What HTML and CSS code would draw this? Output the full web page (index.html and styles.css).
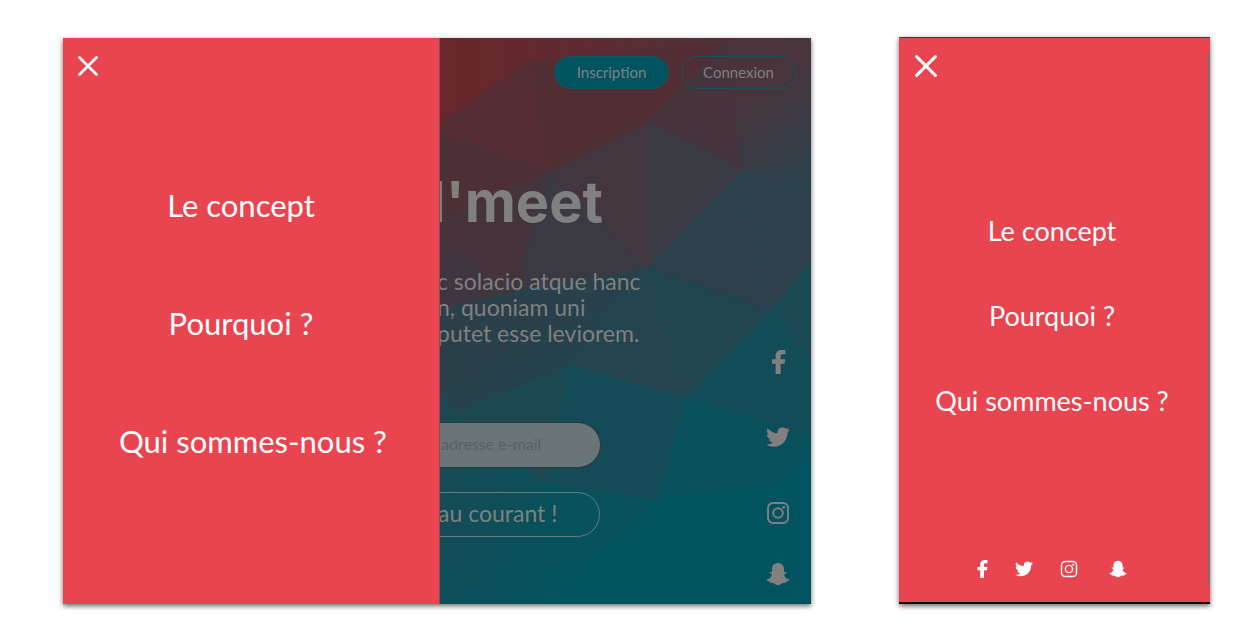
FILE: index.html
```html
<!DOCTYPE html>
<html lang="fr">
<head>
<meta charset="utf-8">
<title>N'meet</title>
<link rel="stylesheet" href="styles.css">
</head>
<body>
<svg class="sprite" aria-hidden="true">
  <symbol id="close" viewBox="0 0 20 20"><path d="M1.500 1.500 18.500 18.500M18.500 1.500 1.500 18.500" fill="none" stroke="currentColor" stroke-width="2.700" stroke-linecap="round"/></symbol>
  <symbol id="facebook" viewBox="0 0 24 24"><path d="M9.600 24V13.800H6V9.300H9.600V6.200C9.600 2.200 11.900 0 15.500 0H19.300V4.300H16.800C15 4.300 14.600 5.200 14.600 6.500V9.300H19.200L18.600 13.800H14.600V24Z" fill="currentColor"/></symbol>
  <symbol id="twitter" viewBox="0 0 24 24"><path d="M23.954 4.569a10 10 0 0 1-2.825.775 4.958 4.958 0 0 0 2.163-2.723 9.900 9.900 0 0 1-3.127 1.184 4.920 4.920 0 0 0-8.384 4.482C7.691 8.094 4.066 6.130 1.640 3.161a4.822 4.822 0 0 0-.666 2.475c0 1.710.870 3.213 2.188 4.096a4.904 4.904 0 0 1-2.228-.616v.061a4.923 4.923 0 0 0 3.946 4.827 4.996 4.996 0 0 1-2.212.085 4.937 4.937 0 0 0 4.604 3.417 9.868 9.868 0 0 1-6.102 2.105c-.390 0-.779-.023-1.170-.067a13.995 13.995 0 0 0 7.557 2.209c9.054 0 13.999-7.496 13.999-13.986 0-.209 0-.420-.015-.630a9.936 9.936 0 0 0 2.460-2.548Z" fill="currentColor"/></symbol>
  <symbol id="instagram" viewBox="0 0 24 24"><g fill="none" stroke="currentColor" stroke-width="1.900"><rect x="2" y="2" width="20" height="20" rx="5"/><circle cx="12" cy="12" r="4.800"/></g><circle cx="17.700" cy="6.300" r="1.400" fill="currentColor"/></symbol>
  <symbol id="snapchat" viewBox="0 0 24 24"><path d="M12 1C8.500 1 6 3.400 6 6.800V10C5.300 10.400 4.200 9.400 3.500 10.100 3.100 10.900 4.400 11.600 5.600 12.200 6.200 12.900 5.100 15.100 3.600 16.300 2.500 17.200.6 17.300.5 18.100.5 19.100 2.700 19.200 3.500 19.500L4 20.900C5.500 20.700 6.900 20.500 8.200 21.400 9.500 22.300 10.500 23 12 23S14.500 22.300 15.800 21.400C17.100 20.500 18.500 20.700 20 20.900L20.500 19.500C21.300 19.200 23.500 19.100 23.500 18.100 23.400 17.300 21.500 17.200 20.400 16.300 18.900 15.100 17.800 12.900 18.400 12.200 19.600 11.600 20.900 10.900 20.500 10.100 19.800 9.400 18.700 10.400 18 10V6.800C18 3.400 15.500 1 12 1Z" fill="currentColor"/></symbol>
</svg>

<main class="stage">
  <section class="tablet">
    <div class="drawer">
      <button class="close" aria-label="Fermer"><svg><use href="#close"/></svg></button>
      <nav class="menu">
        <a href="#concept">Le concept</a>
        <a href="#pourquoi">Pourquoi ?</a>
        <a href="#equipe">Qui sommes-nous ?</a>
      </nav>
    </div>
    <div class="page">
      <svg class="mosaic" viewBox="0 0 371 566" preserveAspectRatio="none" aria-hidden="true">
        <defs>
          <linearGradient id="top"><stop offset="0" stop-color="#68272b"/><stop offset=".25" stop-color="#62292f"/><stop offset="1" stop-color="#49343c"/></linearGradient>
          <linearGradient id="corner" x1=".3" y1="0" x2=".7" y2="1"><stop offset=".3" stop-color="#49343c"/><stop offset="1" stop-color="#2c404a"/></linearGradient>
          <linearGradient id="shade" x1="0" y1="0" x2="1" y2="1"><stop offset="0" stop-color="#303d47"/><stop offset="1" stop-color="#1e4650"/></linearGradient>
          <linearGradient id="foot" x1="0" y1="0" x2="1" y2="1"><stop offset="0" stop-color="#1c4852"/><stop offset=".9" stop-color="#03535e"/></linearGradient>
        </defs>
        <rect width="371" height="566" fill="#01545f"/>
        <path fill="url(#top)" d="M0 0H371V100H0Z"/>
        <path fill="#562d35" d="M0 84 90 22 109 134 0 95Z"/>
        <path fill="#522e34" d="M90 22 283 4 207 84 109 134Z"/>
        <path fill="#502e34" d="M90 22 207 84 109 134Z"/>
        <path fill="#46343d" d="M283 4 303 132 207 84Z"/>
        <path fill="url(#corner)" d="M283 4 371 0V155L303 132Z"/>
        <path fill="#4d3036" d="M0 95 109 134 0 184Z"/>
        <path fill="#44363e" d="M109 134 207 84V230Z"/>
        <path fill="#3b3b44" d="M207 84 303 132 207 230Z"/>
        <path fill="#45343c" d="M0 184 109 134 75 255 0 210Z"/>
        <path fill="#3b3a43" d="M109 134 207 230 75 255Z"/>
        <path fill="#403640" d="M0 210 75 255 0 271Z"/>
        <path fill="#2b404b" d="M303 132 330 273 207 230Z"/>
        <path fill="#2c414b" d="M303 132 371 155V225L330 273Z"/>
        <path fill="url(#shade)" d="M0 271 207 230 129 327 15 375 0 355Z"/>
        <path fill="#24454f" d="M207 230 246 360 129 327Z"/>
        <path fill="#21454f" d="M207 230 330 273 246 360Z"/>
        <path fill="#114c57" d="M330 273 371 320V398L246 360Z"/>
        <path fill="#194952" d="M330 273 371 225V320Z"/>
        <path fill="#1d4852" d="M129 327 15 375 105 447Z"/>
        <path fill="#154b56" d="M129 327 246 360 218 462 105 447Z"/>
        <path fill="#08505b" d="M246 360 371 398V419L335 446 218 462Z"/>
        <path fill="url(#foot)" d="M0 355 15 375 105 447 135 535 120 566H0Z"/>
        <path fill="#07525d" d="M105 447 218 462 135 535Z"/>
      </svg>
      <header class="account">
        <button class="pill pill-solid">Inscription</button>
        <button class="pill">Connexion</button>
      </header>
      <div class="hero">
        <h1>N'meet</h1>
        <p>c solacio atque hanc<br>n, quoniam uni<br>putet esse leviorem.</p>
        <form class="signup">
          <input type="email" placeholder="adresse e-mail" aria-label="adresse e-mail">
          <button type="button">au courant !</button>
        </form>
      </div>
      <div class="social social-column">
        <a href="#facebook" aria-label="Facebook"><svg><use href="#facebook"/></svg></a>
        <a href="#twitter" aria-label="Twitter"><svg><use href="#twitter"/></svg></a>
        <a href="#instagram" aria-label="Instagram"><svg><use href="#instagram"/></svg></a>
        <a href="#snapchat" aria-label="Snapchat"><svg><use href="#snapchat"/></svg></a>
      </div>
    </div>
  </section>

  <section class="phone">
    <button class="close" aria-label="Fermer"><svg><use href="#close"/></svg></button>
    <nav class="menu">
      <a href="#concept">Le concept</a>
      <a href="#pourquoi">Pourquoi ?</a>
      <a href="#equipe">Qui sommes-nous ?</a>
    </nav>
    <div class="social social-row">
      <a href="#facebook" aria-label="Facebook"><svg><use href="#facebook"/></svg></a>
      <a href="#twitter" aria-label="Twitter"><svg><use href="#twitter"/></svg></a>
      <a href="#instagram" aria-label="Instagram"><svg><use href="#instagram"/></svg></a>
      <a href="#snapchat" aria-label="Snapchat"><svg><use href="#snapchat"/></svg></a>
    </div>
    <span class="scrollbar"></span>
  </section>
</main>
</body>
</html>
```
FILE: styles.css
```css
* { box-sizing: border-box; }

body {
  margin: 0;
  background: #fff;
  color: #fff;
  font-family: Lato, "Open Sans", sans-serif;
}

.sprite { position: absolute; width: 0; height: 0; }

button, input { font: inherit; color: inherit; margin: 0; padding: 0; border: 0; background: none; }
a { color: inherit; text-decoration: none; }

.stage {
  display: grid;
  grid-template-columns: 748fr 311fr;
  gap: 88px;
  min-height: 100vh;
  padding: 38px 38px 35px 63px;
}

.tablet, .phone { box-shadow: 0 2px 5px rgba(0, 0, 0, .6); }

.tablet {
  display: grid;
  grid-template-columns: 377fr 371fr;
}

.drawer, .phone {
  display: flex;
  flex-direction: column;
  background: #e94550;
}

.drawer { border-right: 1px solid #8b4a52; }

.close {
  display: flex;
  width: 20px;
  height: 20px;
  margin: 18px 15px 0;
}
.close svg { width: 100%; height: 100%; }

.menu { display: flex; flex-direction: column; }

.drawer .menu {
  align-items: flex-start;
  gap: 78px;
  padding: 109px 0 0 56px;
  font-size: 31px;
  line-height: 40px;
}
.drawer .menu a { min-width: 244px; text-align: center; white-space: nowrap; }

.page {
  position: relative;
  display: grid;
  grid-template-columns: 1fr auto;
  grid-template-rows: auto 1fr;
  min-width: 0;
  overflow: hidden;
  color: #808080;
}

.mosaic { position: absolute; inset: 0; width: 100%; height: 100%; }
.account, .hero, .social-column { position: relative; }

.account {
  grid-column: 1 / -1;
  display: flex;
  justify-content: flex-end;
  gap: 12px;
  padding: 18px 15px 0 0;
}

.pill {
  width: 115px;
  height: 33px;
  border: 1px solid #105662;
  border-radius: 17px;
  font-size: 15px;
  line-height: 31px;
}
.pill-solid { background: #01545f; }

.hero { padding-top: 80px; margin-left: -3px; white-space: nowrap; }

h1 {
  margin: 0 0 0 -34px;
  font-family: Inter, sans-serif;
  font-size: 56px;
  font-weight: 700;
  line-height: 66px;
}

.hero p { margin: 33px 0 0; font-size: 23px; line-height: 26px; }

.signup { display: grid; gap: 25px; width: 163px; margin-top: 77px; }
.signup input {
  width: 100%;
  height: 44px;
  padding: 0 0 4px 4px;
  border-radius: 0 22px 22px 0;
  background: #697576;
  font-size: 16px;
  box-shadow: 0 0 1px 1px rgba(40, 55, 60, .7);
}
.signup input::placeholder { color: #586264; opacity: 1; }
.signup button {
  height: 45px;
  padding-bottom: 4px;
  border: 1px solid #667b7e;
  border-radius: 0 23px 23px 0;
  font-size: 23px;
  text-align: left;
}

.social { display: grid; }
.social a { display: flex; }
.social svg { width: 100%; height: 100%; }

.social-column {
  grid-template-rows: 75px 76px 61px 24px;
  align-self: end;
  padding: 0 20px 18px 0;
}
.social-column a { width: 26px; height: 24px; }

.phone {
  position: relative;
  margin-top: -1px;
  border-top: 1px solid #5a2c35;
  border-bottom: 2px solid #16090b;
}
.phone .close { width: 22px; height: 22px; margin: 17px 16px 0; }
.phone .menu {
  align-items: center;
  gap: 53px;
  padding: 138px 5px 0 0;
  font-size: 27px;
  line-height: 32px;
}
.social-row {
  grid-template-columns: 42px 45px 49px 18px;
  justify-content: center;
  margin-top: auto;
  padding: 0 9px 24px 0;
}
.social-row a { width: 18px; height: 18px; }

.scrollbar {
  position: absolute;
  top: 13px;
  right: 0;
  bottom: 16px;
  width: 2px;
  background: #85696e;
}
```
